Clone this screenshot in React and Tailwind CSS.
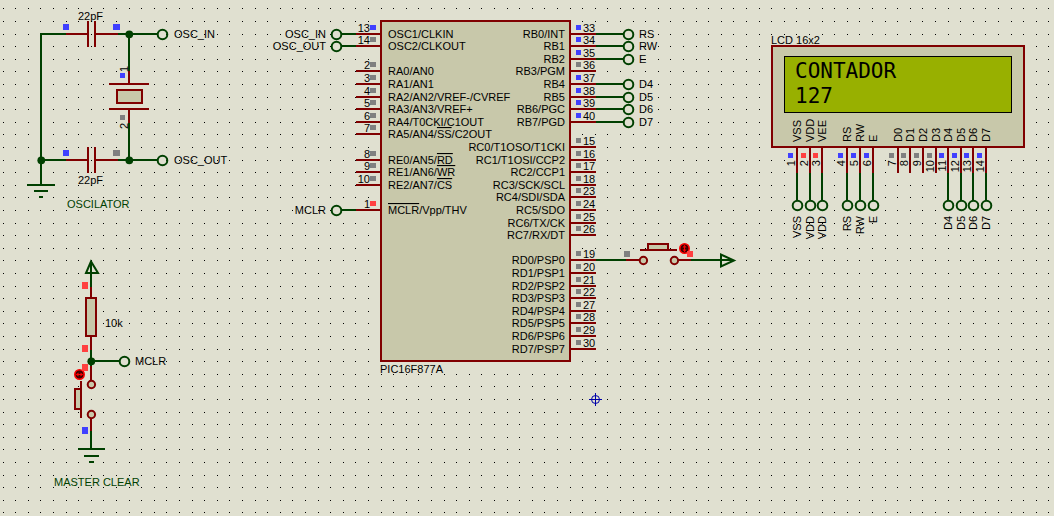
import React from "react";

const LEVEL = { b: "fill-[#4040ff]", g: "fill-[#808080]", r: "fill-[#ff4040]" };
const PART = "stroke-[#800000] fill-none stroke-2";
const BODY = "stroke-[#800000] fill-[#c8c8aa] stroke-2";
const WIRE = "stroke-[#004000] fill-none stroke-2";

// [pin number, y, level, text before the bar, barred text, text after, terminal]
const LEFT_PINS = [
  ["13", 34, "b", "OSC1/CLKIN", "", "", "OSC_IN"],
  ["14", 46, "g", "OSC2/CLKOUT", "", "", "OSC_OUT"],
  ["2", 71, "g", "RA0/AN0", "", ""],
  ["3", 84, "g", "RA1/AN1", "", ""],
  ["4", 97, "g", "RA2/AN2/VREF-/CVREF", "", ""],
  ["5", 109, "g", "RA3/AN3/VREF+", "", ""],
  ["6", 122, "g", "RA4/T0CKI/C1OUT", "", ""],
  ["7", 134, "g", "RA5/AN4/", "SS", "/C2OUT"],
  ["8", 160, "g", "RE0/AN5/", "RD", ""],
  ["9", 172, "g", "RE1/AN6/", "WR", ""],
  ["10", 185, "g", "RE2/AN7/", "CS", ""],
  ["1", 210, "r", "", "MCLR", "/Vpp/THV", "MCLR"],
];

const RIGHT_PINS = [
  ["33", 34, "b", "RB0/INT", "RS"],
  ["34", 46, "b", "RB1", "RW"],
  ["35", 59, "b", "RB2", "E"],
  ["36", 71, "g", "RB3/PGM"],
  ["37", 84, "b", "RB4", "D4"],
  ["38", 97, "b", "RB5", "D5"],
  ["39", 109, "b", "RB6/PGC", "D6"],
  ["40", 122, "b", "RB7/PGD", "D7"],
  ["15", 147, "g", "RC0/T1OSO/T1CKI"],
  ["16", 160, "g", "RC1/T1OSI/CCP2"],
  ["17", 172, "g", "RC2/CCP1"],
  ["18", 185, "g", "RC3/SCK/SCL"],
  ["23", 197, "g", "RC4/SDI/SDA"],
  ["24", 210, "g", "RC5/SDO"],
  ["25", 223, "g", "RC6/TX/CK"],
  ["26", 235, "g", "RC7/RX/DT"],
  ["19", 260, "g", "RD0/PSP0"],
  ["20", 273, "g", "RD1/PSP1"],
  ["21", 286, "g", "RD2/PSP2"],
  ["22", 298, "g", "RD3/PSP3"],
  ["27", 311, "g", "RD4/PSP4"],
  ["28", 323, "g", "RD5/PSP5"],
  ["29", 336, "g", "RD6/PSP6"],
  ["30", 349, "g", "RD7/PSP7"],
];

const LCD_PINS = [
  ["1", 797, "b", "VSS", "VSS"],
  ["2", 810, "r", "VDD", "VDD"],
  ["3", 822, "r", "VEE", "VDD"],
  ["4", 847, "b", "RS", "RS"],
  ["5", 860, "b", "RW", "RW"],
  ["6", 873, "b", "E", "E"],
  ["7", 898, "g", "D0"],
  ["8", 910, "g", "D1"],
  ["9", 923, "g", "D2"],
  ["10", 936, "g", "D3"],
  ["11", 948, "b", "D4", "D4"],
  ["12", 961, "b", "D5", "D5"],
  ["13", 973, "b", "D6", "D6"],
  ["14", 986, "b", "D7", "D7"],
];

function Label({ x, y, end, up, green, children }) {
  return (
    <text
      x={x}
      y={y}
      textAnchor={end ? "end" : "start"}
      transform={up ? `rotate(-90 ${x} ${y})` : undefined}
      className={green ? "text-[11px] fill-[#004000]" : "text-[11px] fill-black"}
    >
      {children}
    </text>
  );
}

function Level({ x, y, w = 5, h = 5, kind }) {
  return <rect x={x} y={y} width={w} height={h} className={LEVEL[kind]} />;
}

function Terminal({ x, y }) {
  return <circle cx={x + 0.5} cy={y + 0.5} r="4.8" className={WIRE} />;
}

function Junction({ x, y }) {
  return <circle cx={x + 0.3} cy={y + 0.3} r="3.9" className="fill-[#004000]" />;
}

function Contact({ x, y }) {
  return <circle cx={x + 0.4} cy={y + 0.5} r="3.7" className={BODY} />;
}

function Toggle({ x, y, vertical }) {
  return (
    <g transform={`translate(${x} ${y})${vertical ? " rotate(90)" : ""}`}>
      <circle r="4.7" className="fill-[#400000] stroke-[#ff0000] stroke-[1.6px]" />
      <path d="M-3 0H3" className="fill-none stroke-[#ff0000] stroke-1" />
      <path d="M-3.5 0L-1 -2V2ZM3.5 0L1 -2V2Z" className="fill-[#ff0000]" />
    </g>
  );
}

function Grid() {
  const xs = [3, 15, 28, 40, 53];
  const ys = [8, 21, 34, 46, 59];
  return (
    <>
      <defs>
        <pattern id="grid" width="63" height="63" patternUnits="userSpaceOnUse">
          {ys.map((y) => xs.map((x) => <rect key={`${x}-${y}`} x={x} y={y} width="1" height="1" />))}
        </pattern>
      </defs>
      <rect width="100%" height="100%" fill="url(#grid)" />
    </>
  );
}

function Oscillator() {
  return (
    <g>
      <path className={PART} d="M66 34H88M95 34H118M88 21V47M95 21V47M66 160H88M95 160H118M88 147V173M95 147V173M129 71V84M129 109V123M109 84H149M109 109H149" />
      <path className={WIRE} d="M66 34H41V185M41 160H66M118 34H157M118 160H157M129 34V71M129 123V160M27 185H55M34 191H48M39 197H43" />
      <rect x="117" y="90" width="25" height="13" className={BODY} />
      <Junction x={129} y={34} />
      <Junction x={41} y={160} />
      <Junction x={129} y={160} />
      <Terminal x={162} y={34} />
      <Terminal x={162} y={160} />
      <Level x={63} y={24} w={6} h={6} kind="b" />
      <Level x={113} y={24} w={7} h={6} kind="b" />
      <Level x={63} y={150} w={6} h={6} kind="b" />
      <Level x={113} y={150} w={7} h={6} kind="g" />
      <Level x={120} y={73} kind="b" />
      <Level x={120} y={115} kind="g" />
      <Label x={78} y={20}>22pF</Label>
      <Label x={78} y={184}>22pF</Label>
      <Label x={128} y={72} up>1</Label>
      <Label x={128} y={129} up>2</Label>
      <Label x={174} y={38}>OSC_IN</Label>
      <Label x={174} y={164}>OSC_OUT</Label>
      <Label x={67} y={208} green>OSCILATOR</Label>
    </g>
  );
}

function MasterClear() {
  return (
    <g>
      <path className={PART} d="M91 287V298M91 336V350M91 366V381M91 418V431M81 381V418" />
      <path className={WIRE} d="M91 262V287M91 261.5L86 273H98ZM91 350V366M91 361H119M91 431V449M78 449H105M84 456H99M89 462H94" />
      <rect x="86" y="298" width="10" height="38" className={BODY} />
      <rect x="75" y="389" width="6" height="20" className={BODY} />
      <Junction x={91} y={361} />
      <Terminal x={124} y={361} />
      <Contact x={91} y={384} />
      <Contact x={91} y={414} />
      <Level x={82} y={282} w={6} h={7} kind="r" />
      <Level x={82} y={345} w={6} h={7} kind="r" />
      <Toggle x={79.5} y={374.5} />
      <Level x={82} y={364} w={6} h={7} kind="r" />
      <Level x={82} y={427} w={6} h={7} kind="b" />
      <Label x={105} y={327}>10k</Label>
      <Label x={135} y={365}>MCLR</Label>
      <Label x={54} y={486} green>MASTER CLEAR</Label>
    </g>
  );
}

function Microcontroller() {
  return (
    <g>
      <rect x="381" y="21" width="189" height="340" className={BODY} />
      {LEFT_PINS.map(([pin, y, kind, before, bar, after, net]) => (
        <g key={pin}>
          <path className={PART} d={`M356 ${y}H381`} />
          <Level x={370} y={y - 9} w={6} kind={kind} />
          <Label x={370} y={y - 2} end>{pin}</Label>
          <Label x={388} y={y + 4}>
            {before}
            {bar && <tspan className="overline">{bar}</tspan>}
            {after}
          </Label>
          {net && (
            <>
              <path className={WIRE} d={`M342 ${y}H356`} />
              <Terminal x={336} y={y} />
              <Label x={326} y={y + 4} end>{net}</Label>
            </>
          )}
        </g>
      ))}
      {RIGHT_PINS.map(([pin, y, kind, name, net]) => (
        <g key={pin}>
          <path className={PART} d={`M570 ${y}H596`} />
          <Level x={576} y={y - 9} kind={kind} />
          <Label x={583} y={y - 2}>{pin}</Label>
          <Label x={565} y={y + 4} end>{name}</Label>
          {net && (
            <>
              <path className={WIRE} d={`M596 ${y}H623`} />
              <Terminal x={628} y={y} />
              <Label x={639} y={y + 4}>{net}</Label>
            </>
          )}
        </g>
      ))}
      <Label x={380} y={373}>PIC16F877A</Label>
    </g>
  );
}

function PushButton() {
  return (
    <g>
      <path className={WIRE} d="M596 260H626M691 260H733M721 254.5V266.5L734 260.5Z" />
      <path className={PART} d="M626 260H640M678 260H691" />
      <rect x="648" y="244" width="20" height="6" className={BODY} />
      <path className={PART} d="M640 250H677" />
      <Contact x={643} y={260} />
      <Contact x={674} y={260} />
      <Toggle x={684.5} y={248.5} vertical />
      <Level x={687} y={251} w={6} h={6} kind="r" />
      <Level x={624} y={251} w={6} h={6} kind="g" />
    </g>
  );
}

function Lcd() {
  return (
    <g>
      <rect x="772" y="46" width="252" height="101" className={BODY} />
      <rect x="784.5" y="56.5" width="227" height="56" className="fill-[#98b000] stroke-black stroke-1" />
      <g className="font-['DejaVu_Sans_Mono',monospace] text-[21px] fill-black">
        <text x="795" y="78">CONTADOR</text>
        <text x="795" y="103">127</text>
      </g>
      <Label x={771} y={44}>LCD 16x2</Label>
      {LCD_PINS.map(([pin, x, kind, name, net]) => (
        <g key={pin}>
          <path className={PART} d={`M${x} 147V173`} />
          <Level x={x - 9} y={153} kind={kind} />
          <Label x={x - 2} y={160} up end>{pin}</Label>
          <Label x={x + 4} y={142} up>{name}</Label>
          {net && (
            <>
              <path className={WIRE} d={`M${x} 173V200`} />
              <Terminal x={x} y={205} />
              <Label x={x + 4} y={216} up end>{net}</Label>
            </>
          )}
        </g>
      ))}
    </g>
  );
}

export default function App() {
  return (
    <main className="flex min-h-screen bg-[#e0e0d0]">
      <svg
        role="img"
        aria-label="PIC16F877A counter schematic"
        className="min-h-screen w-full font-['Liberation_Sans',Arial,sans-serif]"
      >
        <Grid />
        <Oscillator />
        <MasterClear />
        <Microcontroller />
        <PushButton />
        <Lcd />
        <path className="fill-none stroke-[#0000a8] stroke-1" d="M589 399.5H602M595.5 393V406M591.5 399.5a4 4 0 1 0 8 0a4 4 0 1 0 -8 0" />
      </svg>
    </main>
  );
}
